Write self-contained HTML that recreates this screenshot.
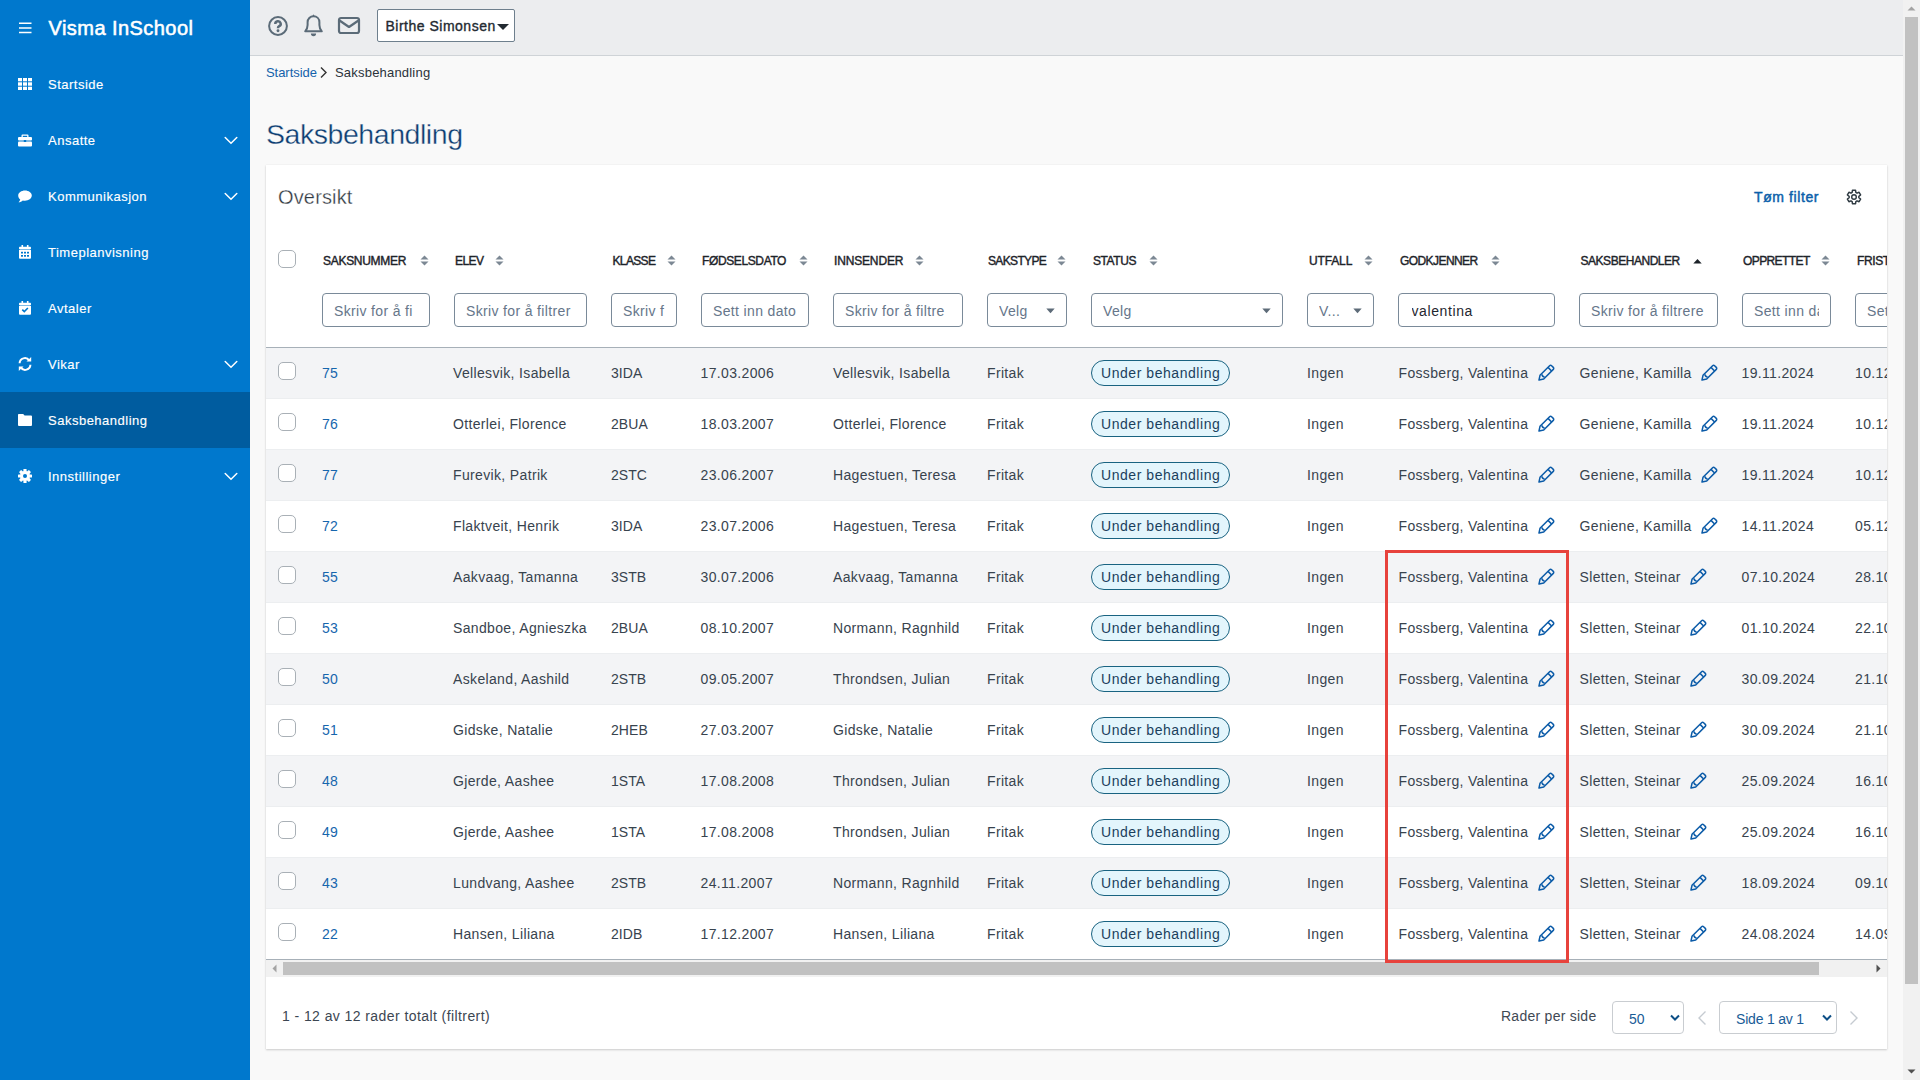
<!DOCTYPE html><html><head><meta charset='utf-8'><style>
*{box-sizing:border-box}
html,body{margin:0;padding:0}
body{width:1920px;height:1080px;overflow:hidden;position:relative;background:#f9f9f9;font-family:"Liberation Sans",sans-serif}
.t{position:absolute;white-space:nowrap}
.a{position:absolute}
.rt{}
</style></head><body><div class="a" style="left:0;top:0;width:250px;height:1080px;background:#0078cd"></div>
<svg class="a" style="left:18px;top:21px" width="15" height="14" viewBox="0 0 15 14"><g stroke="#fff" stroke-width="1.5"><path d="M1 2.3H13.5M1 7H13.5M1 11.6H13.5"/></g></svg>
<div class="t" style="left:48.5px;top:18.27px;font-size:20px;line-height:20px;color:#fff;font-weight:400;letter-spacing:0.45px;-webkit-text-stroke:0.55px #fff">Visma InSchool</div>
<div class="t" style="left:48px;top:77.90px;font-size:13px;line-height:13px;color:#fff;font-weight:400;letter-spacing:0.5px;-webkit-text-stroke:0.15px #fff">Startside</div>
<div class="t" style="left:48px;top:133.90px;font-size:13px;line-height:13px;color:#fff;font-weight:400;letter-spacing:0.5px;-webkit-text-stroke:0.15px #fff">Ansatte</div>
<svg class="a" style="left:223px;top:136px" width="16" height="10" viewBox="0 0 16 10"><path d="M2.2 1.5L8 7.2L13.8 1.5" fill="none" stroke="#fff" stroke-width="1.5" stroke-linecap="round"/></svg>
<div class="t" style="left:48px;top:189.90px;font-size:13px;line-height:13px;color:#fff;font-weight:400;letter-spacing:0.5px;-webkit-text-stroke:0.15px #fff">Kommunikasjon</div>
<svg class="a" style="left:223px;top:192px" width="16" height="10" viewBox="0 0 16 10"><path d="M2.2 1.5L8 7.2L13.8 1.5" fill="none" stroke="#fff" stroke-width="1.5" stroke-linecap="round"/></svg>
<div class="t" style="left:48px;top:245.90px;font-size:13px;line-height:13px;color:#fff;font-weight:400;letter-spacing:0.5px;-webkit-text-stroke:0.15px #fff">Timeplanvisning</div>
<div class="t" style="left:48px;top:301.90px;font-size:13px;line-height:13px;color:#fff;font-weight:400;letter-spacing:0.5px;-webkit-text-stroke:0.15px #fff">Avtaler</div>
<div class="t" style="left:48px;top:357.90px;font-size:13px;line-height:13px;color:#fff;font-weight:400;letter-spacing:0.5px;-webkit-text-stroke:0.15px #fff">Vikar</div>
<svg class="a" style="left:223px;top:360px" width="16" height="10" viewBox="0 0 16 10"><path d="M2.2 1.5L8 7.2L13.8 1.5" fill="none" stroke="#fff" stroke-width="1.5" stroke-linecap="round"/></svg>
<div class="a" style="left:0;top:392px;width:250px;height:56px;background:#005c9f"></div>
<div class="t" style="left:48px;top:413.90px;font-size:13px;line-height:13px;color:#fff;font-weight:400;letter-spacing:0.5px;-webkit-text-stroke:0.15px #fff">Saksbehandling</div>
<div class="t" style="left:48px;top:469.90px;font-size:13px;line-height:13px;color:#fff;font-weight:400;letter-spacing:0.5px;-webkit-text-stroke:0.15px #fff">Innstillinger</div>
<svg class="a" style="left:223px;top:472px" width="16" height="10" viewBox="0 0 16 10"><path d="M2.2 1.5L8 7.2L13.8 1.5" fill="none" stroke="#fff" stroke-width="1.5" stroke-linecap="round"/></svg>
<svg class="a" style="left:18px;top:78px" width="14" height="12" viewBox="0 0 14 12"><g fill="#fff"><rect x="0" y="0" width="4" height="3.3"/><rect x="5" y="0" width="4" height="3.3"/><rect x="10" y="0" width="4" height="3.3"/><rect x="0" y="4.3" width="4" height="3.4"/><rect x="5" y="4.3" width="4" height="3.4"/><rect x="10" y="4.3" width="4" height="3.4"/><rect x="0" y="8.7" width="4" height="3.3"/><rect x="5" y="8.7" width="4" height="3.3"/><rect x="10" y="8.7" width="4" height="3.3"/></g></svg>
<svg class="a" style="left:18px;top:134px" width="14" height="13" viewBox="0 0 14 13"><g fill="#fff"><path d="M4.5 0.5h5a1 1 0 0 1 1 1V3h-1.3V1.8H4.8V3H3.5V1.5a1 1 0 0 1 1-1z"/><rect x="0" y="3" width="14" height="3.6" rx="1"/><rect x="0" y="7.4" width="14" height="5" rx="1"/></g><rect x="5.8" y="6" width="2.4" height="2" fill="#0078cd"/></svg>
<svg class="a" style="left:18px;top:190px" width="14" height="13" viewBox="0 0 14 13"><path fill="#fff" d="M7 0.5C10.6 0.5 13.8 2.7 13.8 5.6C13.8 8.5 10.6 10.7 7 10.7C6.2 10.7 5.5 10.6 4.8 10.4C3.8 11.3 2.2 12.2 0.5 12.3C1.3 11.6 2 10.6 2.2 9.5C1 8.6 0.2 7.2 0.2 5.6C0.2 2.7 3.4 0.5 7 0.5Z"/></svg>
<svg class="a" style="left:19px;top:245px" width="12" height="14" viewBox="0 0 12 14"><g fill="#fff"><rect x="2.5" y="0" width="1.6" height="3"/><rect x="7.9" y="0" width="1.6" height="3"/><rect x="0" y="1.8" width="12" height="2.6" rx="0.8"/><path d="M0 5H12V12.8a1 1 0 0 1-1 1H1a1 1 0 0 1-1-1Z"/></g><g fill="#0078cd"><rect x="2" y="6.8" width="2" height="1.7"/><rect x="5" y="6.8" width="2" height="1.7"/><rect x="8" y="6.8" width="2" height="1.7"/><rect x="2" y="10" width="2" height="1.7"/><rect x="5" y="10" width="2" height="1.7"/><rect x="8" y="10" width="2" height="1.7"/></g></svg>
<svg class="a" style="left:19px;top:301px" width="12" height="14" viewBox="0 0 12 14"><g fill="#fff"><rect x="2.5" y="0" width="1.6" height="3"/><rect x="7.9" y="0" width="1.6" height="3"/><rect x="0" y="1.8" width="12" height="2.6" rx="0.8"/><path d="M0 5H12V12.8a1 1 0 0 1-1 1H1a1 1 0 0 1-1-1Z"/></g><path d="M3.3 8.6L5.3 10.6L8.9 7" fill="none" stroke="#0078cd" stroke-width="1.6"/></svg>
<svg class="a" style="left:17px;top:357px" width="16" height="14" viewBox="0 0 16 14"><g fill="none" stroke="#fff" stroke-width="2"><path d="M2.6 6.2A5.2 5.2 0 0 1 12.2 3.6"/><path d="M13.4 7.8A5.2 5.2 0 0 1 3.8 10.4"/></g><g fill="#fff"><path d="M9.5 4.6L14.2 4.6L14.2 0Z"/><path d="M6.5 9.4L1.8 9.4L1.8 14Z"/></g></svg>
<svg class="a" style="left:18px;top:414px" width="14" height="12" viewBox="0 0 14 12"><path fill="#fff" d="M0.8 0H5.2L6.6 1.6H13a1 1 0 0 1 1 1V11a1 1 0 0 1-1 1H1a1 1 0 0 1-1-1V0.8A0.8 0.8 0 0 1 0.8 0Z"/></svg>
<svg class="a" style="left:18px;top:469px" width="14" height="14" viewBox="0 0 14 14"><g transform="translate(7 7)"><g fill="#fff"><rect x="-1.6" y="-7" width="3.2" height="3" rx="0.6" transform="rotate(0)"/><rect x="-1.6" y="-7" width="3.2" height="3" rx="0.6" transform="rotate(45)"/><rect x="-1.6" y="-7" width="3.2" height="3" rx="0.6" transform="rotate(90)"/><rect x="-1.6" y="-7" width="3.2" height="3" rx="0.6" transform="rotate(135)"/><rect x="-1.6" y="-7" width="3.2" height="3" rx="0.6" transform="rotate(180)"/><rect x="-1.6" y="-7" width="3.2" height="3" rx="0.6" transform="rotate(225)"/><rect x="-1.6" y="-7" width="3.2" height="3" rx="0.6" transform="rotate(270)"/><rect x="-1.6" y="-7" width="3.2" height="3" rx="0.6" transform="rotate(315)"/><circle r="5"/></g><circle r="2" fill="#0078cd"/></g></svg>
<div class="a" style="left:250px;top:0;width:1654px;height:56px;background:#ecedef;border-bottom:1px solid #cfd3d7"></div>
<svg class="a" style="left:267px;top:15.3px" width="22" height="22" viewBox="0 0 22 22"><circle cx="11" cy="11" r="8.9" fill="none" stroke="#5b6b78" stroke-width="2"/><path d="M8.3 8.9a2.7 2.6 0 1 1 3.9 2.3c-0.8 0.45-1.2 0.9-1.2 1.8v0.3" fill="none" stroke="#5b6b78" stroke-width="2.5"/><circle cx="11" cy="15.7" r="1.45" fill="#5b6b78"/></svg>
<svg class="a" style="left:303px;top:13px" width="21" height="24" viewBox="0 0 21 24"><path d="M2.2 18.3C3.8 16.5 4.6 14.5 4.6 12V9.3C4.6 5.8 7.2 3.3 10.5 3.3C13.8 3.3 16.4 5.8 16.4 9.3V12C16.4 14.5 17.2 16.5 18.8 18.3Z" fill="none" stroke="#5b6b78" stroke-width="2" stroke-linejoin="round"/><path d="M10.5 1.2L8.9 3.9H12.1Z" fill="#5b6b78"/><path d="M7.9 20.6H13.1A2.6 2.6 0 0 1 7.9 20.6Z" fill="#5b6b78"/></svg>
<svg class="a" style="left:337px;top:16px" width="24" height="19" viewBox="0 0 24 19"><rect x="2" y="2" width="20" height="15" rx="2" fill="none" stroke="#5b6b78" stroke-width="2.2"/><path d="M2.5 4.5L12 11L21.5 4.5" fill="none" stroke="#5b6b78" stroke-width="2.2" stroke-linejoin="round"/></svg>
<div class="a" style="left:377px;top:9px;width:138px;height:33px;background:#fff;border:1px solid #6e7f8d;border-radius:2px"></div>
<div class="t" style="left:385.5px;top:19.15px;font-size:14px;line-height:14px;color:#232a31;font-weight:400;letter-spacing:0.5px;-webkit-text-stroke:0.35px #232a31">Birthe Simonsen</div>
<svg class="a" style="left:496px;top:23px" width="14" height="8" viewBox="0 0 14 8"><path d="M1 1H13L7 7Z" fill="#232a31"/></svg>
<div class="a" style="left:1903px;top:0;width:17px;height:1080px;background:#f1f1f1"></div>
<div class="a" style="left:1905px;top:17px;width:13px;height:967px;background:#c1c1c1"></div>
<svg class="a" style="left:1903px;top:0" width="17" height="17" viewBox="0 0 17 17"><path d="M4.5 10.5H12.5L8.5 6.5Z" fill="#a3a3a3"/></svg>
<svg class="a" style="left:1903px;top:1063px" width="17" height="17" viewBox="0 0 17 17"><path d="M4.5 6.5H12.5L8.5 10.5Z" fill="#505050"/></svg>
<div class="t" style="left:266px;top:66.00px;font-size:13px;line-height:13px;color:#1462ab;font-weight:400;letter-spacing:-0.05px;">Startside</div>
<svg class="a" style="left:319px;top:66px" width="9" height="13" viewBox="0 0 9 13"><path d="M2 1.5L7 6.5L2 11.5" fill="none" stroke="#333" stroke-width="1.4"/></svg>
<div class="t" style="left:335px;top:66.00px;font-size:13px;line-height:13px;color:#2b333b;font-weight:400;letter-spacing:0.2px;">Saksbehandling</div>
<div class="t" style="left:266px;top:119.67px;font-size:28.5px;line-height:28.5px;color:#0d3e72;font-weight:400;letter-spacing:-0.45px;-webkit-text-stroke:0.35px #f9f9f9">Saksbehandling</div>
<div class="a" style="left:266px;top:165px;width:1621px;height:884px;background:#fff;box-shadow:0 1px 2px rgba(0,0,0,0.18),0 0 1px rgba(0,0,0,0.08)"></div>
<div class="t" style="left:278px;top:186.87px;font-size:20px;line-height:20px;color:#2f3740;font-weight:400;letter-spacing:0.15px;-webkit-text-stroke:0.3px #fff">Oversikt</div>
<div class="t" style="left:1754px;top:189.85px;font-size:14px;line-height:14px;color:#0a60aa;font-weight:400;letter-spacing:0.6px;-webkit-text-stroke:0.45px #0a60aa">Tøm filter</div>
<svg class="a" style="left:1845px;top:188px" width="18" height="18" viewBox="0 0 18 18"><path d="M7.16 4.46 L7.45 2.28 L10.55 2.28 L10.84 4.46 L12.02 5.14 L14.05 4.29 L15.60 6.98 L13.85 8.32 L13.85 9.68 L15.60 11.02 L14.05 13.71 L12.02 12.86 L10.84 13.54 L10.55 15.72 L7.45 15.72 L7.16 13.54 L5.98 12.86 L3.95 13.71 L2.40 11.02 L4.15 9.68 L4.15 8.32 L2.40 6.98 L3.95 4.29 L5.98 5.14Z" fill="none" stroke="#2f3a42" stroke-width="1.5" stroke-linejoin="round"/><circle cx="9" cy="9" r="2.3" fill="none" stroke="#2f3a42" stroke-width="1.4"/></svg>
<div class="a" style="left:278px;top:250px;width:18px;height:18px;border:1px solid #a9b0b6;border-radius:5px;background:#fff"></div>
<div class="a" style="left:266px;top:0;width:1621px;height:1080px;overflow:hidden"><div class="a" style="left:-266px;top:0;width:1920px;height:1080px"><div class="t" style="left:323px;top:254.84px;font-size:12px;line-height:12px;color:#1d2329;font-weight:400;letter-spacing:-0.29px;-webkit-text-stroke:0.4px #1d2329">SAKSNUMMER</div>
<svg class="a" style="left:420px;top:255px" width="9" height="12" viewBox="0 0 9 12"><path d="M0.5 4.6H8.5L4.5 0.6Z M0.5 6.6H8.5L4.5 10.6Z" fill="#7c8894"/></svg>
<div class="t" style="left:455px;top:254.84px;font-size:12px;line-height:12px;color:#1d2329;font-weight:400;letter-spacing:-0.6px;-webkit-text-stroke:0.4px #1d2329">ELEV</div>
<svg class="a" style="left:495px;top:255px" width="9" height="12" viewBox="0 0 9 12"><path d="M0.5 4.6H8.5L4.5 0.6Z M0.5 6.6H8.5L4.5 10.6Z" fill="#7c8894"/></svg>
<div class="t" style="left:612.5px;top:254.84px;font-size:12px;line-height:12px;color:#1d2329;font-weight:400;letter-spacing:-0.65px;-webkit-text-stroke:0.4px #1d2329">KLASSE</div>
<svg class="a" style="left:667px;top:255px" width="9" height="12" viewBox="0 0 9 12"><path d="M0.5 4.6H8.5L4.5 0.6Z M0.5 6.6H8.5L4.5 10.6Z" fill="#7c8894"/></svg>
<div class="t" style="left:702px;top:254.84px;font-size:12px;line-height:12px;color:#1d2329;font-weight:400;letter-spacing:-0.38px;-webkit-text-stroke:0.4px #1d2329">FØDSELSDATO</div>
<svg class="a" style="left:799px;top:255px" width="9" height="12" viewBox="0 0 9 12"><path d="M0.5 4.6H8.5L4.5 0.6Z M0.5 6.6H8.5L4.5 10.6Z" fill="#7c8894"/></svg>
<div class="t" style="left:834px;top:254.84px;font-size:12px;line-height:12px;color:#1d2329;font-weight:400;letter-spacing:-0.16px;-webkit-text-stroke:0.4px #1d2329">INNSENDER</div>
<svg class="a" style="left:915px;top:255px" width="9" height="12" viewBox="0 0 9 12"><path d="M0.5 4.6H8.5L4.5 0.6Z M0.5 6.6H8.5L4.5 10.6Z" fill="#7c8894"/></svg>
<div class="t" style="left:988px;top:254.84px;font-size:12px;line-height:12px;color:#1d2329;font-weight:400;letter-spacing:-0.65px;-webkit-text-stroke:0.4px #1d2329">SAKSTYPE</div>
<svg class="a" style="left:1057px;top:255px" width="9" height="12" viewBox="0 0 9 12"><path d="M0.5 4.6H8.5L4.5 0.6Z M0.5 6.6H8.5L4.5 10.6Z" fill="#7c8894"/></svg>
<div class="t" style="left:1093px;top:254.84px;font-size:12px;line-height:12px;color:#1d2329;font-weight:400;letter-spacing:-0.42px;-webkit-text-stroke:0.4px #1d2329">STATUS</div>
<svg class="a" style="left:1149px;top:255px" width="9" height="12" viewBox="0 0 9 12"><path d="M0.5 4.6H8.5L4.5 0.6Z M0.5 6.6H8.5L4.5 10.6Z" fill="#7c8894"/></svg>
<div class="t" style="left:1309px;top:254.84px;font-size:12px;line-height:12px;color:#1d2329;font-weight:400;letter-spacing:-0.14px;-webkit-text-stroke:0.4px #1d2329">UTFALL</div>
<svg class="a" style="left:1364px;top:255px" width="9" height="12" viewBox="0 0 9 12"><path d="M0.5 4.6H8.5L4.5 0.6Z M0.5 6.6H8.5L4.5 10.6Z" fill="#7c8894"/></svg>
<div class="t" style="left:1400px;top:254.84px;font-size:12px;line-height:12px;color:#1d2329;font-weight:400;letter-spacing:-0.57px;-webkit-text-stroke:0.4px #1d2329">GODKJENNER</div>
<svg class="a" style="left:1491px;top:255px" width="9" height="12" viewBox="0 0 9 12"><path d="M0.5 4.6H8.5L4.5 0.6Z M0.5 6.6H8.5L4.5 10.6Z" fill="#7c8894"/></svg>
<div class="t" style="left:1580.5px;top:254.84px;font-size:12px;line-height:12px;color:#1d2329;font-weight:400;letter-spacing:-0.47px;-webkit-text-stroke:0.4px #1d2329">SAKSBEHANDLER</div>
<div class="t" style="left:1743px;top:254.84px;font-size:12px;line-height:12px;color:#1d2329;font-weight:400;letter-spacing:-0.6px;-webkit-text-stroke:0.4px #1d2329">OPPRETTET</div>
<svg class="a" style="left:1821px;top:255px" width="9" height="12" viewBox="0 0 9 12"><path d="M0.5 4.6H8.5L4.5 0.6Z M0.5 6.6H8.5L4.5 10.6Z" fill="#7c8894"/></svg>
<div class="t" style="left:1857px;top:254.84px;font-size:12px;line-height:12px;color:#1d2329;font-weight:400;letter-spacing:-0.4px;-webkit-text-stroke:0.4px #1d2329">FRIST</div>
<svg class="a" style="left:1693px;top:258px" width="9" height="6" viewBox="0 0 9 6"><path d="M0.3 5.6H8.7L4.5 1Z" fill="#1d2329"/></svg>
<div class="a" style="left:322px;top:293px;width:108px;height:34px;border:1px solid #7a8a99;border-radius:4px;background:#fff"></div>
<div class="a" style="left:334px;top:293px;width:84px;height:34px;overflow:hidden"><div class="t" style="left:0px;top:11.15px;font-size:14px;line-height:14px;color:#66768a;font-weight:400;letter-spacing:0.35px;">Skriv for å fi</div></div>
<div class="a" style="left:454px;top:293px;width:133px;height:34px;border:1px solid #7a8a99;border-radius:4px;background:#fff"></div>
<div class="a" style="left:466px;top:293px;width:109px;height:34px;overflow:hidden"><div class="t" style="left:0px;top:11.15px;font-size:14px;line-height:14px;color:#66768a;font-weight:400;letter-spacing:0.35px;">Skriv for å filtrer</div></div>
<div class="a" style="left:611px;top:293px;width:66px;height:34px;border:1px solid #7a8a99;border-radius:4px;background:#fff"></div>
<div class="a" style="left:623px;top:293px;width:42px;height:34px;overflow:hidden"><div class="t" style="left:0px;top:11.15px;font-size:14px;line-height:14px;color:#66768a;font-weight:400;letter-spacing:0.35px;">Skriv f</div></div>
<div class="a" style="left:701px;top:293px;width:108px;height:34px;border:1px solid #7a8a99;border-radius:4px;background:#fff"></div>
<div class="a" style="left:713px;top:293px;width:84px;height:34px;overflow:hidden"><div class="t" style="left:0px;top:11.15px;font-size:14px;line-height:14px;color:#66768a;font-weight:400;letter-spacing:0.35px;">Sett inn dato</div></div>
<div class="a" style="left:833px;top:293px;width:130px;height:34px;border:1px solid #7a8a99;border-radius:4px;background:#fff"></div>
<div class="a" style="left:845px;top:293px;width:106px;height:34px;overflow:hidden"><div class="t" style="left:0px;top:11.15px;font-size:14px;line-height:14px;color:#66768a;font-weight:400;letter-spacing:0.35px;">Skriv for å filtre</div></div>
<div class="a" style="left:987px;top:293px;width:80px;height:34px;border:1px solid #7a8a99;border-radius:4px;background:#fff"></div>
<div class="a" style="left:999px;top:293px;width:40px;height:34px;overflow:hidden"><div class="t" style="left:0px;top:11.15px;font-size:14px;line-height:14px;color:#66768a;font-weight:400;letter-spacing:0.35px;">Velg</div></div>
<svg class="a" style="left:1046px;top:308px" width="9" height="6" viewBox="0 0 9 6"><path d="M0.3 0.5H8.7L4.5 5.2Z" fill="#5d6b78"/></svg>
<div class="a" style="left:1091px;top:293px;width:192px;height:34px;border:1px solid #7a8a99;border-radius:4px;background:#fff"></div>
<div class="a" style="left:1103px;top:293px;width:152px;height:34px;overflow:hidden"><div class="t" style="left:0px;top:11.15px;font-size:14px;line-height:14px;color:#66768a;font-weight:400;letter-spacing:0.35px;">Velg</div></div>
<svg class="a" style="left:1262px;top:308px" width="9" height="6" viewBox="0 0 9 6"><path d="M0.3 0.5H8.7L4.5 5.2Z" fill="#5d6b78"/></svg>
<div class="a" style="left:1307px;top:293px;width:67px;height:34px;border:1px solid #7a8a99;border-radius:4px;background:#fff"></div>
<div class="a" style="left:1319px;top:293px;width:30px;height:34px;overflow:hidden"><div class="t" style="left:0px;top:11.15px;font-size:14px;line-height:14px;color:#66768a;font-weight:400;letter-spacing:0.35px;">V...</div></div>
<svg class="a" style="left:1353px;top:308px" width="9" height="6" viewBox="0 0 9 6"><path d="M0.3 0.5H8.7L4.5 5.2Z" fill="#5d6b78"/></svg>
<div class="a" style="left:1398px;top:293px;width:157px;height:34px;border:1px solid #7a8a99;border-radius:4px;background:#fff"></div>
<div class="a" style="left:1411.5px;top:293px;width:133px;height:34px;overflow:hidden"><div class="t" style="left:0px;top:11.15px;font-size:14px;line-height:14px;color:#1f2730;font-weight:400;letter-spacing:0.6px;">valentina</div></div>
<div class="a" style="left:1579px;top:293px;width:139px;height:34px;border:1px solid #7a8a99;border-radius:4px;background:#fff"></div>
<div class="a" style="left:1591px;top:293px;width:115px;height:34px;overflow:hidden"><div class="t" style="left:0px;top:11.15px;font-size:14px;line-height:14px;color:#66768a;font-weight:400;letter-spacing:0.35px;">Skriv for å filtrere</div></div>
<div class="a" style="left:1742px;top:293px;width:89px;height:34px;border:1px solid #7a8a99;border-radius:4px;background:#fff"></div>
<div class="a" style="left:1754px;top:293px;width:65px;height:34px;overflow:hidden"><div class="t" style="left:0px;top:11.15px;font-size:14px;line-height:14px;color:#66768a;font-weight:400;letter-spacing:0.35px;">Sett inn dato</div></div>
<div class="a" style="left:1855px;top:293px;width:135px;height:34px;border:1px solid #7a8a99;border-radius:4px;background:#fff"></div>
<div class="a" style="left:1867px;top:293px;width:111px;height:34px;overflow:hidden"><div class="t" style="left:0px;top:11.15px;font-size:14px;line-height:14px;color:#66768a;font-weight:400;letter-spacing:0.35px;">Sett inn dato</div></div>
<div class="a" style="left:266px;top:347px;width:1621px;height:1px;background:#a7b0b8"></div>
<div class="a" style="left:266px;top:348px;width:1621px;height:51px;background:#f3f4f6;border-bottom:1px solid #eceef0"></div>
<div class="a" style="left:278px;top:362px;width:18px;height:18px;border:1px solid #a9b0b6;border-radius:5px;background:#fff"></div>
<div class="t rt" style="left:322px;top:365.95px;font-size:14px;line-height:14px;color:#1666ad;font-weight:400;letter-spacing:0.3px;">75</div>
<div class="t rt" style="left:453px;top:365.95px;font-size:14px;line-height:14px;color:#38434e;font-weight:400;letter-spacing:0.35px;">Vellesvik, Isabella</div>
<div class="t rt" style="left:611px;top:365.95px;font-size:14px;line-height:14px;color:#38434e;font-weight:400;letter-spacing:0.05px;">3IDA</div>
<div class="t rt" style="left:700.5px;top:365.95px;font-size:14px;line-height:14px;color:#38434e;font-weight:400;letter-spacing:0.35px;">17.03.2006</div>
<div class="t rt" style="left:833px;top:365.95px;font-size:14px;line-height:14px;color:#38434e;font-weight:400;letter-spacing:0.35px;">Vellesvik, Isabella</div>
<div class="t rt" style="left:987px;top:365.95px;font-size:14px;line-height:14px;color:#38434e;font-weight:400;letter-spacing:0.35px;">Fritak</div>
<div class="a" style="left:1091px;top:360px;width:139px;height:26px;border:1px solid #196381;border-radius:13px;background:#e3f5fc"></div>
<div class="t rt" style="left:1101px;top:365.95px;font-size:14px;line-height:14px;color:#1b3f5c;font-weight:400;letter-spacing:0.55px;">Under behandling</div>
<div class="t rt" style="left:1307px;top:365.95px;font-size:14px;line-height:14px;color:#38434e;font-weight:400;letter-spacing:0.35px;">Ingen</div>
<div class="t rt" style="left:1398.5px;top:365.95px;font-size:14px;line-height:14px;color:#38434e;font-weight:400;letter-spacing:0.33px;">Fossberg, Valentina</div>
<svg class="a" style="left:1537px;top:364px" width="18" height="18" viewBox="0 0 18 18"><g fill="none" stroke="#0b5ba8" stroke-width="1.5" stroke-linejoin="round"><path d="M2 16L3 11.3L12.6 1.7a1.4 1.4 0 0 1 2 0L16.3 3.4a1.4 1.4 0 0 1 0 2L6.7 15Z"/><path d="M11 3.4L14.6 7"/><path d="M4.9 10.4Q5.1 12.8 7.6 13"/></g></svg>
<div class="t rt" style="left:1579.5px;top:365.95px;font-size:14px;line-height:14px;color:#38434e;font-weight:400;letter-spacing:0.35px;">Geniene, Kamilla</div>
<svg class="a" style="left:1700px;top:364px" width="18" height="18" viewBox="0 0 18 18"><g fill="none" stroke="#0b5ba8" stroke-width="1.5" stroke-linejoin="round"><path d="M2 16L3 11.3L12.6 1.7a1.4 1.4 0 0 1 2 0L16.3 3.4a1.4 1.4 0 0 1 0 2L6.7 15Z"/><path d="M11 3.4L14.6 7"/><path d="M4.9 10.4Q5.1 12.8 7.6 13"/></g></svg>
<div class="t rt" style="left:1741.5px;top:365.95px;font-size:14px;line-height:14px;color:#38434e;font-weight:400;letter-spacing:0.35px;">19.11.2024</div>
<div class="t rt" style="left:1855px;top:365.95px;font-size:14px;line-height:14px;color:#38434e;font-weight:400;letter-spacing:0.35px;">10.12.2024</div>
<div class="a" style="left:266px;top:399px;width:1621px;height:51px;background:#ffffff;border-bottom:1px solid #eceef0"></div>
<div class="a" style="left:278px;top:413px;width:18px;height:18px;border:1px solid #a9b0b6;border-radius:5px;background:#fff"></div>
<div class="t rt" style="left:322px;top:416.95px;font-size:14px;line-height:14px;color:#1666ad;font-weight:400;letter-spacing:0.3px;">76</div>
<div class="t rt" style="left:453px;top:416.95px;font-size:14px;line-height:14px;color:#38434e;font-weight:400;letter-spacing:0.35px;">Otterlei, Florence</div>
<div class="t rt" style="left:611px;top:416.95px;font-size:14px;line-height:14px;color:#38434e;font-weight:400;letter-spacing:0.05px;">2BUA</div>
<div class="t rt" style="left:700.5px;top:416.95px;font-size:14px;line-height:14px;color:#38434e;font-weight:400;letter-spacing:0.35px;">18.03.2007</div>
<div class="t rt" style="left:833px;top:416.95px;font-size:14px;line-height:14px;color:#38434e;font-weight:400;letter-spacing:0.35px;">Otterlei, Florence</div>
<div class="t rt" style="left:987px;top:416.95px;font-size:14px;line-height:14px;color:#38434e;font-weight:400;letter-spacing:0.35px;">Fritak</div>
<div class="a" style="left:1091px;top:411px;width:139px;height:26px;border:1px solid #196381;border-radius:13px;background:#e3f5fc"></div>
<div class="t rt" style="left:1101px;top:416.95px;font-size:14px;line-height:14px;color:#1b3f5c;font-weight:400;letter-spacing:0.55px;">Under behandling</div>
<div class="t rt" style="left:1307px;top:416.95px;font-size:14px;line-height:14px;color:#38434e;font-weight:400;letter-spacing:0.35px;">Ingen</div>
<div class="t rt" style="left:1398.5px;top:416.95px;font-size:14px;line-height:14px;color:#38434e;font-weight:400;letter-spacing:0.33px;">Fossberg, Valentina</div>
<svg class="a" style="left:1537px;top:415px" width="18" height="18" viewBox="0 0 18 18"><g fill="none" stroke="#0b5ba8" stroke-width="1.5" stroke-linejoin="round"><path d="M2 16L3 11.3L12.6 1.7a1.4 1.4 0 0 1 2 0L16.3 3.4a1.4 1.4 0 0 1 0 2L6.7 15Z"/><path d="M11 3.4L14.6 7"/><path d="M4.9 10.4Q5.1 12.8 7.6 13"/></g></svg>
<div class="t rt" style="left:1579.5px;top:416.95px;font-size:14px;line-height:14px;color:#38434e;font-weight:400;letter-spacing:0.35px;">Geniene, Kamilla</div>
<svg class="a" style="left:1700px;top:415px" width="18" height="18" viewBox="0 0 18 18"><g fill="none" stroke="#0b5ba8" stroke-width="1.5" stroke-linejoin="round"><path d="M2 16L3 11.3L12.6 1.7a1.4 1.4 0 0 1 2 0L16.3 3.4a1.4 1.4 0 0 1 0 2L6.7 15Z"/><path d="M11 3.4L14.6 7"/><path d="M4.9 10.4Q5.1 12.8 7.6 13"/></g></svg>
<div class="t rt" style="left:1741.5px;top:416.95px;font-size:14px;line-height:14px;color:#38434e;font-weight:400;letter-spacing:0.35px;">19.11.2024</div>
<div class="t rt" style="left:1855px;top:416.95px;font-size:14px;line-height:14px;color:#38434e;font-weight:400;letter-spacing:0.35px;">10.12.2024</div>
<div class="a" style="left:266px;top:450px;width:1621px;height:51px;background:#f3f4f6;border-bottom:1px solid #eceef0"></div>
<div class="a" style="left:278px;top:464px;width:18px;height:18px;border:1px solid #a9b0b6;border-radius:5px;background:#fff"></div>
<div class="t rt" style="left:322px;top:467.95px;font-size:14px;line-height:14px;color:#1666ad;font-weight:400;letter-spacing:0.3px;">77</div>
<div class="t rt" style="left:453px;top:467.95px;font-size:14px;line-height:14px;color:#38434e;font-weight:400;letter-spacing:0.35px;">Furevik, Patrik</div>
<div class="t rt" style="left:611px;top:467.95px;font-size:14px;line-height:14px;color:#38434e;font-weight:400;letter-spacing:0.05px;">2STC</div>
<div class="t rt" style="left:700.5px;top:467.95px;font-size:14px;line-height:14px;color:#38434e;font-weight:400;letter-spacing:0.35px;">23.06.2007</div>
<div class="t rt" style="left:833px;top:467.95px;font-size:14px;line-height:14px;color:#38434e;font-weight:400;letter-spacing:0.35px;">Hagestuen, Teresa</div>
<div class="t rt" style="left:987px;top:467.95px;font-size:14px;line-height:14px;color:#38434e;font-weight:400;letter-spacing:0.35px;">Fritak</div>
<div class="a" style="left:1091px;top:462px;width:139px;height:26px;border:1px solid #196381;border-radius:13px;background:#e3f5fc"></div>
<div class="t rt" style="left:1101px;top:467.95px;font-size:14px;line-height:14px;color:#1b3f5c;font-weight:400;letter-spacing:0.55px;">Under behandling</div>
<div class="t rt" style="left:1307px;top:467.95px;font-size:14px;line-height:14px;color:#38434e;font-weight:400;letter-spacing:0.35px;">Ingen</div>
<div class="t rt" style="left:1398.5px;top:467.95px;font-size:14px;line-height:14px;color:#38434e;font-weight:400;letter-spacing:0.33px;">Fossberg, Valentina</div>
<svg class="a" style="left:1537px;top:466px" width="18" height="18" viewBox="0 0 18 18"><g fill="none" stroke="#0b5ba8" stroke-width="1.5" stroke-linejoin="round"><path d="M2 16L3 11.3L12.6 1.7a1.4 1.4 0 0 1 2 0L16.3 3.4a1.4 1.4 0 0 1 0 2L6.7 15Z"/><path d="M11 3.4L14.6 7"/><path d="M4.9 10.4Q5.1 12.8 7.6 13"/></g></svg>
<div class="t rt" style="left:1579.5px;top:467.95px;font-size:14px;line-height:14px;color:#38434e;font-weight:400;letter-spacing:0.35px;">Geniene, Kamilla</div>
<svg class="a" style="left:1700px;top:466px" width="18" height="18" viewBox="0 0 18 18"><g fill="none" stroke="#0b5ba8" stroke-width="1.5" stroke-linejoin="round"><path d="M2 16L3 11.3L12.6 1.7a1.4 1.4 0 0 1 2 0L16.3 3.4a1.4 1.4 0 0 1 0 2L6.7 15Z"/><path d="M11 3.4L14.6 7"/><path d="M4.9 10.4Q5.1 12.8 7.6 13"/></g></svg>
<div class="t rt" style="left:1741.5px;top:467.95px;font-size:14px;line-height:14px;color:#38434e;font-weight:400;letter-spacing:0.35px;">19.11.2024</div>
<div class="t rt" style="left:1855px;top:467.95px;font-size:14px;line-height:14px;color:#38434e;font-weight:400;letter-spacing:0.35px;">10.12.2024</div>
<div class="a" style="left:266px;top:501px;width:1621px;height:51px;background:#ffffff;border-bottom:1px solid #eceef0"></div>
<div class="a" style="left:278px;top:515px;width:18px;height:18px;border:1px solid #a9b0b6;border-radius:5px;background:#fff"></div>
<div class="t rt" style="left:322px;top:518.95px;font-size:14px;line-height:14px;color:#1666ad;font-weight:400;letter-spacing:0.3px;">72</div>
<div class="t rt" style="left:453px;top:518.95px;font-size:14px;line-height:14px;color:#38434e;font-weight:400;letter-spacing:0.35px;">Flaktveit, Henrik</div>
<div class="t rt" style="left:611px;top:518.95px;font-size:14px;line-height:14px;color:#38434e;font-weight:400;letter-spacing:0.05px;">3IDA</div>
<div class="t rt" style="left:700.5px;top:518.95px;font-size:14px;line-height:14px;color:#38434e;font-weight:400;letter-spacing:0.35px;">23.07.2006</div>
<div class="t rt" style="left:833px;top:518.95px;font-size:14px;line-height:14px;color:#38434e;font-weight:400;letter-spacing:0.35px;">Hagestuen, Teresa</div>
<div class="t rt" style="left:987px;top:518.95px;font-size:14px;line-height:14px;color:#38434e;font-weight:400;letter-spacing:0.35px;">Fritak</div>
<div class="a" style="left:1091px;top:513px;width:139px;height:26px;border:1px solid #196381;border-radius:13px;background:#e3f5fc"></div>
<div class="t rt" style="left:1101px;top:518.95px;font-size:14px;line-height:14px;color:#1b3f5c;font-weight:400;letter-spacing:0.55px;">Under behandling</div>
<div class="t rt" style="left:1307px;top:518.95px;font-size:14px;line-height:14px;color:#38434e;font-weight:400;letter-spacing:0.35px;">Ingen</div>
<div class="t rt" style="left:1398.5px;top:518.95px;font-size:14px;line-height:14px;color:#38434e;font-weight:400;letter-spacing:0.33px;">Fossberg, Valentina</div>
<svg class="a" style="left:1537px;top:517px" width="18" height="18" viewBox="0 0 18 18"><g fill="none" stroke="#0b5ba8" stroke-width="1.5" stroke-linejoin="round"><path d="M2 16L3 11.3L12.6 1.7a1.4 1.4 0 0 1 2 0L16.3 3.4a1.4 1.4 0 0 1 0 2L6.7 15Z"/><path d="M11 3.4L14.6 7"/><path d="M4.9 10.4Q5.1 12.8 7.6 13"/></g></svg>
<div class="t rt" style="left:1579.5px;top:518.95px;font-size:14px;line-height:14px;color:#38434e;font-weight:400;letter-spacing:0.35px;">Geniene, Kamilla</div>
<svg class="a" style="left:1700px;top:517px" width="18" height="18" viewBox="0 0 18 18"><g fill="none" stroke="#0b5ba8" stroke-width="1.5" stroke-linejoin="round"><path d="M2 16L3 11.3L12.6 1.7a1.4 1.4 0 0 1 2 0L16.3 3.4a1.4 1.4 0 0 1 0 2L6.7 15Z"/><path d="M11 3.4L14.6 7"/><path d="M4.9 10.4Q5.1 12.8 7.6 13"/></g></svg>
<div class="t rt" style="left:1741.5px;top:518.95px;font-size:14px;line-height:14px;color:#38434e;font-weight:400;letter-spacing:0.35px;">14.11.2024</div>
<div class="t rt" style="left:1855px;top:518.95px;font-size:14px;line-height:14px;color:#38434e;font-weight:400;letter-spacing:0.35px;">05.12.2024</div>
<div class="a" style="left:266px;top:552px;width:1621px;height:51px;background:#f3f4f6;border-bottom:1px solid #eceef0"></div>
<div class="a" style="left:278px;top:566px;width:18px;height:18px;border:1px solid #a9b0b6;border-radius:5px;background:#fff"></div>
<div class="t rt" style="left:322px;top:569.95px;font-size:14px;line-height:14px;color:#1666ad;font-weight:400;letter-spacing:0.3px;">55</div>
<div class="t rt" style="left:453px;top:569.95px;font-size:14px;line-height:14px;color:#38434e;font-weight:400;letter-spacing:0.35px;">Aakvaag, Tamanna</div>
<div class="t rt" style="left:611px;top:569.95px;font-size:14px;line-height:14px;color:#38434e;font-weight:400;letter-spacing:0.05px;">3STB</div>
<div class="t rt" style="left:700.5px;top:569.95px;font-size:14px;line-height:14px;color:#38434e;font-weight:400;letter-spacing:0.35px;">30.07.2006</div>
<div class="t rt" style="left:833px;top:569.95px;font-size:14px;line-height:14px;color:#38434e;font-weight:400;letter-spacing:0.35px;">Aakvaag, Tamanna</div>
<div class="t rt" style="left:987px;top:569.95px;font-size:14px;line-height:14px;color:#38434e;font-weight:400;letter-spacing:0.35px;">Fritak</div>
<div class="a" style="left:1091px;top:564px;width:139px;height:26px;border:1px solid #196381;border-radius:13px;background:#e3f5fc"></div>
<div class="t rt" style="left:1101px;top:569.95px;font-size:14px;line-height:14px;color:#1b3f5c;font-weight:400;letter-spacing:0.55px;">Under behandling</div>
<div class="t rt" style="left:1307px;top:569.95px;font-size:14px;line-height:14px;color:#38434e;font-weight:400;letter-spacing:0.35px;">Ingen</div>
<div class="t rt" style="left:1398.5px;top:569.95px;font-size:14px;line-height:14px;color:#38434e;font-weight:400;letter-spacing:0.33px;">Fossberg, Valentina</div>
<svg class="a" style="left:1537px;top:568px" width="18" height="18" viewBox="0 0 18 18"><g fill="none" stroke="#0b5ba8" stroke-width="1.5" stroke-linejoin="round"><path d="M2 16L3 11.3L12.6 1.7a1.4 1.4 0 0 1 2 0L16.3 3.4a1.4 1.4 0 0 1 0 2L6.7 15Z"/><path d="M11 3.4L14.6 7"/><path d="M4.9 10.4Q5.1 12.8 7.6 13"/></g></svg>
<div class="t rt" style="left:1579.5px;top:569.95px;font-size:14px;line-height:14px;color:#38434e;font-weight:400;letter-spacing:0.35px;">Sletten, Steinar</div>
<svg class="a" style="left:1689px;top:568px" width="18" height="18" viewBox="0 0 18 18"><g fill="none" stroke="#0b5ba8" stroke-width="1.5" stroke-linejoin="round"><path d="M2 16L3 11.3L12.6 1.7a1.4 1.4 0 0 1 2 0L16.3 3.4a1.4 1.4 0 0 1 0 2L6.7 15Z"/><path d="M11 3.4L14.6 7"/><path d="M4.9 10.4Q5.1 12.8 7.6 13"/></g></svg>
<div class="t rt" style="left:1741.5px;top:569.95px;font-size:14px;line-height:14px;color:#38434e;font-weight:400;letter-spacing:0.35px;">07.10.2024</div>
<div class="t rt" style="left:1855px;top:569.95px;font-size:14px;line-height:14px;color:#38434e;font-weight:400;letter-spacing:0.35px;">28.10.2024</div>
<div class="a" style="left:266px;top:603px;width:1621px;height:51px;background:#ffffff;border-bottom:1px solid #eceef0"></div>
<div class="a" style="left:278px;top:617px;width:18px;height:18px;border:1px solid #a9b0b6;border-radius:5px;background:#fff"></div>
<div class="t rt" style="left:322px;top:620.95px;font-size:14px;line-height:14px;color:#1666ad;font-weight:400;letter-spacing:0.3px;">53</div>
<div class="t rt" style="left:453px;top:620.95px;font-size:14px;line-height:14px;color:#38434e;font-weight:400;letter-spacing:0.35px;">Sandboe, Agnieszka</div>
<div class="t rt" style="left:611px;top:620.95px;font-size:14px;line-height:14px;color:#38434e;font-weight:400;letter-spacing:0.05px;">2BUA</div>
<div class="t rt" style="left:700.5px;top:620.95px;font-size:14px;line-height:14px;color:#38434e;font-weight:400;letter-spacing:0.35px;">08.10.2007</div>
<div class="t rt" style="left:833px;top:620.95px;font-size:14px;line-height:14px;color:#38434e;font-weight:400;letter-spacing:0.35px;">Normann, Ragnhild</div>
<div class="t rt" style="left:987px;top:620.95px;font-size:14px;line-height:14px;color:#38434e;font-weight:400;letter-spacing:0.35px;">Fritak</div>
<div class="a" style="left:1091px;top:615px;width:139px;height:26px;border:1px solid #196381;border-radius:13px;background:#e3f5fc"></div>
<div class="t rt" style="left:1101px;top:620.95px;font-size:14px;line-height:14px;color:#1b3f5c;font-weight:400;letter-spacing:0.55px;">Under behandling</div>
<div class="t rt" style="left:1307px;top:620.95px;font-size:14px;line-height:14px;color:#38434e;font-weight:400;letter-spacing:0.35px;">Ingen</div>
<div class="t rt" style="left:1398.5px;top:620.95px;font-size:14px;line-height:14px;color:#38434e;font-weight:400;letter-spacing:0.33px;">Fossberg, Valentina</div>
<svg class="a" style="left:1537px;top:619px" width="18" height="18" viewBox="0 0 18 18"><g fill="none" stroke="#0b5ba8" stroke-width="1.5" stroke-linejoin="round"><path d="M2 16L3 11.3L12.6 1.7a1.4 1.4 0 0 1 2 0L16.3 3.4a1.4 1.4 0 0 1 0 2L6.7 15Z"/><path d="M11 3.4L14.6 7"/><path d="M4.9 10.4Q5.1 12.8 7.6 13"/></g></svg>
<div class="t rt" style="left:1579.5px;top:620.95px;font-size:14px;line-height:14px;color:#38434e;font-weight:400;letter-spacing:0.35px;">Sletten, Steinar</div>
<svg class="a" style="left:1689px;top:619px" width="18" height="18" viewBox="0 0 18 18"><g fill="none" stroke="#0b5ba8" stroke-width="1.5" stroke-linejoin="round"><path d="M2 16L3 11.3L12.6 1.7a1.4 1.4 0 0 1 2 0L16.3 3.4a1.4 1.4 0 0 1 0 2L6.7 15Z"/><path d="M11 3.4L14.6 7"/><path d="M4.9 10.4Q5.1 12.8 7.6 13"/></g></svg>
<div class="t rt" style="left:1741.5px;top:620.95px;font-size:14px;line-height:14px;color:#38434e;font-weight:400;letter-spacing:0.35px;">01.10.2024</div>
<div class="t rt" style="left:1855px;top:620.95px;font-size:14px;line-height:14px;color:#38434e;font-weight:400;letter-spacing:0.35px;">22.10.2024</div>
<div class="a" style="left:266px;top:654px;width:1621px;height:51px;background:#f3f4f6;border-bottom:1px solid #eceef0"></div>
<div class="a" style="left:278px;top:668px;width:18px;height:18px;border:1px solid #a9b0b6;border-radius:5px;background:#fff"></div>
<div class="t rt" style="left:322px;top:671.95px;font-size:14px;line-height:14px;color:#1666ad;font-weight:400;letter-spacing:0.3px;">50</div>
<div class="t rt" style="left:453px;top:671.95px;font-size:14px;line-height:14px;color:#38434e;font-weight:400;letter-spacing:0.35px;">Askeland, Aashild</div>
<div class="t rt" style="left:611px;top:671.95px;font-size:14px;line-height:14px;color:#38434e;font-weight:400;letter-spacing:0.05px;">2STB</div>
<div class="t rt" style="left:700.5px;top:671.95px;font-size:14px;line-height:14px;color:#38434e;font-weight:400;letter-spacing:0.35px;">09.05.2007</div>
<div class="t rt" style="left:833px;top:671.95px;font-size:14px;line-height:14px;color:#38434e;font-weight:400;letter-spacing:0.35px;">Throndsen, Julian</div>
<div class="t rt" style="left:987px;top:671.95px;font-size:14px;line-height:14px;color:#38434e;font-weight:400;letter-spacing:0.35px;">Fritak</div>
<div class="a" style="left:1091px;top:666px;width:139px;height:26px;border:1px solid #196381;border-radius:13px;background:#e3f5fc"></div>
<div class="t rt" style="left:1101px;top:671.95px;font-size:14px;line-height:14px;color:#1b3f5c;font-weight:400;letter-spacing:0.55px;">Under behandling</div>
<div class="t rt" style="left:1307px;top:671.95px;font-size:14px;line-height:14px;color:#38434e;font-weight:400;letter-spacing:0.35px;">Ingen</div>
<div class="t rt" style="left:1398.5px;top:671.95px;font-size:14px;line-height:14px;color:#38434e;font-weight:400;letter-spacing:0.33px;">Fossberg, Valentina</div>
<svg class="a" style="left:1537px;top:670px" width="18" height="18" viewBox="0 0 18 18"><g fill="none" stroke="#0b5ba8" stroke-width="1.5" stroke-linejoin="round"><path d="M2 16L3 11.3L12.6 1.7a1.4 1.4 0 0 1 2 0L16.3 3.4a1.4 1.4 0 0 1 0 2L6.7 15Z"/><path d="M11 3.4L14.6 7"/><path d="M4.9 10.4Q5.1 12.8 7.6 13"/></g></svg>
<div class="t rt" style="left:1579.5px;top:671.95px;font-size:14px;line-height:14px;color:#38434e;font-weight:400;letter-spacing:0.35px;">Sletten, Steinar</div>
<svg class="a" style="left:1689px;top:670px" width="18" height="18" viewBox="0 0 18 18"><g fill="none" stroke="#0b5ba8" stroke-width="1.5" stroke-linejoin="round"><path d="M2 16L3 11.3L12.6 1.7a1.4 1.4 0 0 1 2 0L16.3 3.4a1.4 1.4 0 0 1 0 2L6.7 15Z"/><path d="M11 3.4L14.6 7"/><path d="M4.9 10.4Q5.1 12.8 7.6 13"/></g></svg>
<div class="t rt" style="left:1741.5px;top:671.95px;font-size:14px;line-height:14px;color:#38434e;font-weight:400;letter-spacing:0.35px;">30.09.2024</div>
<div class="t rt" style="left:1855px;top:671.95px;font-size:14px;line-height:14px;color:#38434e;font-weight:400;letter-spacing:0.35px;">21.10.2024</div>
<div class="a" style="left:266px;top:705px;width:1621px;height:51px;background:#ffffff;border-bottom:1px solid #eceef0"></div>
<div class="a" style="left:278px;top:719px;width:18px;height:18px;border:1px solid #a9b0b6;border-radius:5px;background:#fff"></div>
<div class="t rt" style="left:322px;top:722.95px;font-size:14px;line-height:14px;color:#1666ad;font-weight:400;letter-spacing:0.3px;">51</div>
<div class="t rt" style="left:453px;top:722.95px;font-size:14px;line-height:14px;color:#38434e;font-weight:400;letter-spacing:0.35px;">Gidske, Natalie</div>
<div class="t rt" style="left:611px;top:722.95px;font-size:14px;line-height:14px;color:#38434e;font-weight:400;letter-spacing:0.05px;">2HEB</div>
<div class="t rt" style="left:700.5px;top:722.95px;font-size:14px;line-height:14px;color:#38434e;font-weight:400;letter-spacing:0.35px;">27.03.2007</div>
<div class="t rt" style="left:833px;top:722.95px;font-size:14px;line-height:14px;color:#38434e;font-weight:400;letter-spacing:0.35px;">Gidske, Natalie</div>
<div class="t rt" style="left:987px;top:722.95px;font-size:14px;line-height:14px;color:#38434e;font-weight:400;letter-spacing:0.35px;">Fritak</div>
<div class="a" style="left:1091px;top:717px;width:139px;height:26px;border:1px solid #196381;border-radius:13px;background:#e3f5fc"></div>
<div class="t rt" style="left:1101px;top:722.95px;font-size:14px;line-height:14px;color:#1b3f5c;font-weight:400;letter-spacing:0.55px;">Under behandling</div>
<div class="t rt" style="left:1307px;top:722.95px;font-size:14px;line-height:14px;color:#38434e;font-weight:400;letter-spacing:0.35px;">Ingen</div>
<div class="t rt" style="left:1398.5px;top:722.95px;font-size:14px;line-height:14px;color:#38434e;font-weight:400;letter-spacing:0.33px;">Fossberg, Valentina</div>
<svg class="a" style="left:1537px;top:721px" width="18" height="18" viewBox="0 0 18 18"><g fill="none" stroke="#0b5ba8" stroke-width="1.5" stroke-linejoin="round"><path d="M2 16L3 11.3L12.6 1.7a1.4 1.4 0 0 1 2 0L16.3 3.4a1.4 1.4 0 0 1 0 2L6.7 15Z"/><path d="M11 3.4L14.6 7"/><path d="M4.9 10.4Q5.1 12.8 7.6 13"/></g></svg>
<div class="t rt" style="left:1579.5px;top:722.95px;font-size:14px;line-height:14px;color:#38434e;font-weight:400;letter-spacing:0.35px;">Sletten, Steinar</div>
<svg class="a" style="left:1689px;top:721px" width="18" height="18" viewBox="0 0 18 18"><g fill="none" stroke="#0b5ba8" stroke-width="1.5" stroke-linejoin="round"><path d="M2 16L3 11.3L12.6 1.7a1.4 1.4 0 0 1 2 0L16.3 3.4a1.4 1.4 0 0 1 0 2L6.7 15Z"/><path d="M11 3.4L14.6 7"/><path d="M4.9 10.4Q5.1 12.8 7.6 13"/></g></svg>
<div class="t rt" style="left:1741.5px;top:722.95px;font-size:14px;line-height:14px;color:#38434e;font-weight:400;letter-spacing:0.35px;">30.09.2024</div>
<div class="t rt" style="left:1855px;top:722.95px;font-size:14px;line-height:14px;color:#38434e;font-weight:400;letter-spacing:0.35px;">21.10.2024</div>
<div class="a" style="left:266px;top:756px;width:1621px;height:51px;background:#f3f4f6;border-bottom:1px solid #eceef0"></div>
<div class="a" style="left:278px;top:770px;width:18px;height:18px;border:1px solid #a9b0b6;border-radius:5px;background:#fff"></div>
<div class="t rt" style="left:322px;top:773.95px;font-size:14px;line-height:14px;color:#1666ad;font-weight:400;letter-spacing:0.3px;">48</div>
<div class="t rt" style="left:453px;top:773.95px;font-size:14px;line-height:14px;color:#38434e;font-weight:400;letter-spacing:0.35px;">Gjerde, Aashee</div>
<div class="t rt" style="left:611px;top:773.95px;font-size:14px;line-height:14px;color:#38434e;font-weight:400;letter-spacing:0.05px;">1STA</div>
<div class="t rt" style="left:700.5px;top:773.95px;font-size:14px;line-height:14px;color:#38434e;font-weight:400;letter-spacing:0.35px;">17.08.2008</div>
<div class="t rt" style="left:833px;top:773.95px;font-size:14px;line-height:14px;color:#38434e;font-weight:400;letter-spacing:0.35px;">Throndsen, Julian</div>
<div class="t rt" style="left:987px;top:773.95px;font-size:14px;line-height:14px;color:#38434e;font-weight:400;letter-spacing:0.35px;">Fritak</div>
<div class="a" style="left:1091px;top:768px;width:139px;height:26px;border:1px solid #196381;border-radius:13px;background:#e3f5fc"></div>
<div class="t rt" style="left:1101px;top:773.95px;font-size:14px;line-height:14px;color:#1b3f5c;font-weight:400;letter-spacing:0.55px;">Under behandling</div>
<div class="t rt" style="left:1307px;top:773.95px;font-size:14px;line-height:14px;color:#38434e;font-weight:400;letter-spacing:0.35px;">Ingen</div>
<div class="t rt" style="left:1398.5px;top:773.95px;font-size:14px;line-height:14px;color:#38434e;font-weight:400;letter-spacing:0.33px;">Fossberg, Valentina</div>
<svg class="a" style="left:1537px;top:772px" width="18" height="18" viewBox="0 0 18 18"><g fill="none" stroke="#0b5ba8" stroke-width="1.5" stroke-linejoin="round"><path d="M2 16L3 11.3L12.6 1.7a1.4 1.4 0 0 1 2 0L16.3 3.4a1.4 1.4 0 0 1 0 2L6.7 15Z"/><path d="M11 3.4L14.6 7"/><path d="M4.9 10.4Q5.1 12.8 7.6 13"/></g></svg>
<div class="t rt" style="left:1579.5px;top:773.95px;font-size:14px;line-height:14px;color:#38434e;font-weight:400;letter-spacing:0.35px;">Sletten, Steinar</div>
<svg class="a" style="left:1689px;top:772px" width="18" height="18" viewBox="0 0 18 18"><g fill="none" stroke="#0b5ba8" stroke-width="1.5" stroke-linejoin="round"><path d="M2 16L3 11.3L12.6 1.7a1.4 1.4 0 0 1 2 0L16.3 3.4a1.4 1.4 0 0 1 0 2L6.7 15Z"/><path d="M11 3.4L14.6 7"/><path d="M4.9 10.4Q5.1 12.8 7.6 13"/></g></svg>
<div class="t rt" style="left:1741.5px;top:773.95px;font-size:14px;line-height:14px;color:#38434e;font-weight:400;letter-spacing:0.35px;">25.09.2024</div>
<div class="t rt" style="left:1855px;top:773.95px;font-size:14px;line-height:14px;color:#38434e;font-weight:400;letter-spacing:0.35px;">16.10.2024</div>
<div class="a" style="left:266px;top:807px;width:1621px;height:51px;background:#ffffff;border-bottom:1px solid #eceef0"></div>
<div class="a" style="left:278px;top:821px;width:18px;height:18px;border:1px solid #a9b0b6;border-radius:5px;background:#fff"></div>
<div class="t rt" style="left:322px;top:824.95px;font-size:14px;line-height:14px;color:#1666ad;font-weight:400;letter-spacing:0.3px;">49</div>
<div class="t rt" style="left:453px;top:824.95px;font-size:14px;line-height:14px;color:#38434e;font-weight:400;letter-spacing:0.35px;">Gjerde, Aashee</div>
<div class="t rt" style="left:611px;top:824.95px;font-size:14px;line-height:14px;color:#38434e;font-weight:400;letter-spacing:0.05px;">1STA</div>
<div class="t rt" style="left:700.5px;top:824.95px;font-size:14px;line-height:14px;color:#38434e;font-weight:400;letter-spacing:0.35px;">17.08.2008</div>
<div class="t rt" style="left:833px;top:824.95px;font-size:14px;line-height:14px;color:#38434e;font-weight:400;letter-spacing:0.35px;">Throndsen, Julian</div>
<div class="t rt" style="left:987px;top:824.95px;font-size:14px;line-height:14px;color:#38434e;font-weight:400;letter-spacing:0.35px;">Fritak</div>
<div class="a" style="left:1091px;top:819px;width:139px;height:26px;border:1px solid #196381;border-radius:13px;background:#e3f5fc"></div>
<div class="t rt" style="left:1101px;top:824.95px;font-size:14px;line-height:14px;color:#1b3f5c;font-weight:400;letter-spacing:0.55px;">Under behandling</div>
<div class="t rt" style="left:1307px;top:824.95px;font-size:14px;line-height:14px;color:#38434e;font-weight:400;letter-spacing:0.35px;">Ingen</div>
<div class="t rt" style="left:1398.5px;top:824.95px;font-size:14px;line-height:14px;color:#38434e;font-weight:400;letter-spacing:0.33px;">Fossberg, Valentina</div>
<svg class="a" style="left:1537px;top:823px" width="18" height="18" viewBox="0 0 18 18"><g fill="none" stroke="#0b5ba8" stroke-width="1.5" stroke-linejoin="round"><path d="M2 16L3 11.3L12.6 1.7a1.4 1.4 0 0 1 2 0L16.3 3.4a1.4 1.4 0 0 1 0 2L6.7 15Z"/><path d="M11 3.4L14.6 7"/><path d="M4.9 10.4Q5.1 12.8 7.6 13"/></g></svg>
<div class="t rt" style="left:1579.5px;top:824.95px;font-size:14px;line-height:14px;color:#38434e;font-weight:400;letter-spacing:0.35px;">Sletten, Steinar</div>
<svg class="a" style="left:1689px;top:823px" width="18" height="18" viewBox="0 0 18 18"><g fill="none" stroke="#0b5ba8" stroke-width="1.5" stroke-linejoin="round"><path d="M2 16L3 11.3L12.6 1.7a1.4 1.4 0 0 1 2 0L16.3 3.4a1.4 1.4 0 0 1 0 2L6.7 15Z"/><path d="M11 3.4L14.6 7"/><path d="M4.9 10.4Q5.1 12.8 7.6 13"/></g></svg>
<div class="t rt" style="left:1741.5px;top:824.95px;font-size:14px;line-height:14px;color:#38434e;font-weight:400;letter-spacing:0.35px;">25.09.2024</div>
<div class="t rt" style="left:1855px;top:824.95px;font-size:14px;line-height:14px;color:#38434e;font-weight:400;letter-spacing:0.35px;">16.10.2024</div>
<div class="a" style="left:266px;top:858px;width:1621px;height:51px;background:#f3f4f6;border-bottom:1px solid #eceef0"></div>
<div class="a" style="left:278px;top:872px;width:18px;height:18px;border:1px solid #a9b0b6;border-radius:5px;background:#fff"></div>
<div class="t rt" style="left:322px;top:875.95px;font-size:14px;line-height:14px;color:#1666ad;font-weight:400;letter-spacing:0.3px;">43</div>
<div class="t rt" style="left:453px;top:875.95px;font-size:14px;line-height:14px;color:#38434e;font-weight:400;letter-spacing:0.35px;">Lundvang, Aashee</div>
<div class="t rt" style="left:611px;top:875.95px;font-size:14px;line-height:14px;color:#38434e;font-weight:400;letter-spacing:0.05px;">2STB</div>
<div class="t rt" style="left:700.5px;top:875.95px;font-size:14px;line-height:14px;color:#38434e;font-weight:400;letter-spacing:0.35px;">24.11.2007</div>
<div class="t rt" style="left:833px;top:875.95px;font-size:14px;line-height:14px;color:#38434e;font-weight:400;letter-spacing:0.35px;">Normann, Ragnhild</div>
<div class="t rt" style="left:987px;top:875.95px;font-size:14px;line-height:14px;color:#38434e;font-weight:400;letter-spacing:0.35px;">Fritak</div>
<div class="a" style="left:1091px;top:870px;width:139px;height:26px;border:1px solid #196381;border-radius:13px;background:#e3f5fc"></div>
<div class="t rt" style="left:1101px;top:875.95px;font-size:14px;line-height:14px;color:#1b3f5c;font-weight:400;letter-spacing:0.55px;">Under behandling</div>
<div class="t rt" style="left:1307px;top:875.95px;font-size:14px;line-height:14px;color:#38434e;font-weight:400;letter-spacing:0.35px;">Ingen</div>
<div class="t rt" style="left:1398.5px;top:875.95px;font-size:14px;line-height:14px;color:#38434e;font-weight:400;letter-spacing:0.33px;">Fossberg, Valentina</div>
<svg class="a" style="left:1537px;top:874px" width="18" height="18" viewBox="0 0 18 18"><g fill="none" stroke="#0b5ba8" stroke-width="1.5" stroke-linejoin="round"><path d="M2 16L3 11.3L12.6 1.7a1.4 1.4 0 0 1 2 0L16.3 3.4a1.4 1.4 0 0 1 0 2L6.7 15Z"/><path d="M11 3.4L14.6 7"/><path d="M4.9 10.4Q5.1 12.8 7.6 13"/></g></svg>
<div class="t rt" style="left:1579.5px;top:875.95px;font-size:14px;line-height:14px;color:#38434e;font-weight:400;letter-spacing:0.35px;">Sletten, Steinar</div>
<svg class="a" style="left:1689px;top:874px" width="18" height="18" viewBox="0 0 18 18"><g fill="none" stroke="#0b5ba8" stroke-width="1.5" stroke-linejoin="round"><path d="M2 16L3 11.3L12.6 1.7a1.4 1.4 0 0 1 2 0L16.3 3.4a1.4 1.4 0 0 1 0 2L6.7 15Z"/><path d="M11 3.4L14.6 7"/><path d="M4.9 10.4Q5.1 12.8 7.6 13"/></g></svg>
<div class="t rt" style="left:1741.5px;top:875.95px;font-size:14px;line-height:14px;color:#38434e;font-weight:400;letter-spacing:0.35px;">18.09.2024</div>
<div class="t rt" style="left:1855px;top:875.95px;font-size:14px;line-height:14px;color:#38434e;font-weight:400;letter-spacing:0.35px;">09.10.2024</div>
<div class="a" style="left:266px;top:909px;width:1621px;height:51px;background:#ffffff;border-bottom:1px solid #eceef0"></div>
<div class="a" style="left:278px;top:923px;width:18px;height:18px;border:1px solid #a9b0b6;border-radius:5px;background:#fff"></div>
<div class="t rt" style="left:322px;top:926.95px;font-size:14px;line-height:14px;color:#1666ad;font-weight:400;letter-spacing:0.3px;">22</div>
<div class="t rt" style="left:453px;top:926.95px;font-size:14px;line-height:14px;color:#38434e;font-weight:400;letter-spacing:0.35px;">Hansen, Liliana</div>
<div class="t rt" style="left:611px;top:926.95px;font-size:14px;line-height:14px;color:#38434e;font-weight:400;letter-spacing:0.05px;">2IDB</div>
<div class="t rt" style="left:700.5px;top:926.95px;font-size:14px;line-height:14px;color:#38434e;font-weight:400;letter-spacing:0.35px;">17.12.2007</div>
<div class="t rt" style="left:833px;top:926.95px;font-size:14px;line-height:14px;color:#38434e;font-weight:400;letter-spacing:0.35px;">Hansen, Liliana</div>
<div class="t rt" style="left:987px;top:926.95px;font-size:14px;line-height:14px;color:#38434e;font-weight:400;letter-spacing:0.35px;">Fritak</div>
<div class="a" style="left:1091px;top:921px;width:139px;height:26px;border:1px solid #196381;border-radius:13px;background:#e3f5fc"></div>
<div class="t rt" style="left:1101px;top:926.95px;font-size:14px;line-height:14px;color:#1b3f5c;font-weight:400;letter-spacing:0.55px;">Under behandling</div>
<div class="t rt" style="left:1307px;top:926.95px;font-size:14px;line-height:14px;color:#38434e;font-weight:400;letter-spacing:0.35px;">Ingen</div>
<div class="t rt" style="left:1398.5px;top:926.95px;font-size:14px;line-height:14px;color:#38434e;font-weight:400;letter-spacing:0.33px;">Fossberg, Valentina</div>
<svg class="a" style="left:1537px;top:925px" width="18" height="18" viewBox="0 0 18 18"><g fill="none" stroke="#0b5ba8" stroke-width="1.5" stroke-linejoin="round"><path d="M2 16L3 11.3L12.6 1.7a1.4 1.4 0 0 1 2 0L16.3 3.4a1.4 1.4 0 0 1 0 2L6.7 15Z"/><path d="M11 3.4L14.6 7"/><path d="M4.9 10.4Q5.1 12.8 7.6 13"/></g></svg>
<div class="t rt" style="left:1579.5px;top:926.95px;font-size:14px;line-height:14px;color:#38434e;font-weight:400;letter-spacing:0.35px;">Sletten, Steinar</div>
<svg class="a" style="left:1689px;top:925px" width="18" height="18" viewBox="0 0 18 18"><g fill="none" stroke="#0b5ba8" stroke-width="1.5" stroke-linejoin="round"><path d="M2 16L3 11.3L12.6 1.7a1.4 1.4 0 0 1 2 0L16.3 3.4a1.4 1.4 0 0 1 0 2L6.7 15Z"/><path d="M11 3.4L14.6 7"/><path d="M4.9 10.4Q5.1 12.8 7.6 13"/></g></svg>
<div class="t rt" style="left:1741.5px;top:926.95px;font-size:14px;line-height:14px;color:#38434e;font-weight:400;letter-spacing:0.35px;">24.08.2024</div>
<div class="t rt" style="left:1855px;top:926.95px;font-size:14px;line-height:14px;color:#38434e;font-weight:400;letter-spacing:0.35px;">14.09.2024</div>
<div class="a" style="left:266px;top:959px;width:1621px;height:1px;background:#a7b0b8"></div>
<div class="a" style="left:266px;top:960px;width:1621px;height:17px;background:#f1f1f1"></div>
<div class="a" style="left:283px;top:962px;width:1536px;height:13px;background:#c1c1c1"></div>
<svg class="a" style="left:266px;top:960px" width="17" height="17" viewBox="0 0 17 17"><path d="M10.5 4.5V12.5L6.5 8.5Z" fill="#a3a3a3"/></svg>
<svg class="a" style="left:1870px;top:960px" width="17" height="17" viewBox="0 0 17 17"><path d="M6.5 4.5V12.5L10.5 8.5Z" fill="#505050"/></svg></div></div>
<div class="a" style="left:1385px;top:550px;width:184px;height:413px;border:3px solid #e7423c"></div>
<div class="t" style="left:282px;top:1009.15px;font-size:14px;line-height:14px;color:#3c4652;font-weight:400;letter-spacing:0.42px;">1 - 12 av 12 rader totalt (filtrert)</div>
<div class="t" style="left:1501px;top:1008.95px;font-size:14px;line-height:14px;color:#3f4954;font-weight:400;letter-spacing:0.26px;">Rader per side</div>
<div class="a" style="left:1612px;top:1001px;width:72px;height:33px;border:1px solid #c9cdd1;border-radius:4px;background:#fff"></div>
<div class="t" style="left:1629px;top:1012.15px;font-size:14px;line-height:14px;color:#1a5c97;font-weight:400;letter-spacing:0px;">50</div>
<svg class="a" style="left:1669px;top:1013px" width="12" height="10" viewBox="0 0 12 10"><path d="M2 2.5L6 6.5L10 2.5" fill="none" stroke="#0d4f86" stroke-width="2"/></svg>
<svg class="a" style="left:1696px;top:1010px" width="12" height="16" viewBox="0 0 12 16"><path d="M9.5 1.5L3 8L9.5 14.5" fill="none" stroke="#c5cbd1" stroke-width="1.4"/></svg>
<div class="a" style="left:1719px;top:1001px;width:118px;height:33px;border:1px solid #c9cdd1;border-radius:4px;background:#fff"></div>
<div class="t" style="left:1736px;top:1012.15px;font-size:14px;line-height:14px;color:#1a5c97;font-weight:400;letter-spacing:-0.2px;">Side 1 av 1</div>
<svg class="a" style="left:1821px;top:1013px" width="12" height="10" viewBox="0 0 12 10"><path d="M2 2.5L6 6.5L10 2.5" fill="none" stroke="#0d4f86" stroke-width="2"/></svg>
<svg class="a" style="left:1848px;top:1010px" width="12" height="16" viewBox="0 0 12 16"><path d="M2.5 1.5L9 8L2.5 14.5" fill="none" stroke="#c5cbd1" stroke-width="1.4"/></svg></body></html>
